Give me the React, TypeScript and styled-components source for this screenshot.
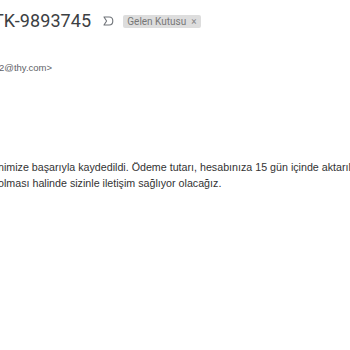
import React from "react";
import styled, { createGlobalStyle } from "styled-components";

const GlobalStyle = createGlobalStyle`
  html, body {
    margin: 0;
    padding: 0;
    background: #ffffff;
  }
`;

const Page = styled.div`
  width: 350px;
  height: 350px;
  overflow: hidden;
  background: #ffffff;
  font-family: "Liberation Sans", Arial, sans-serif;
  color: #222222;
`;

const Header = styled.div`
  display: flex;
  align-items: center;
  margin-left: -7px;
  padding-top: 9px;
  height: 24px;
`;

const Subject = styled.h2`
  margin: 0;
  font-family: Roboto, "Liberation Sans", sans-serif;
  font-weight: 400;
  font-size: 18px;
  line-height: 24px;
  color: #3c4043;
  letter-spacing: 0.1px;
  white-space: nowrap;
`;

const Marker = styled.svg`
  flex: none;
  margin-left: 12px;
  width: 11px;
  height: 10px;
`;

const Chip = styled.span`
  display: inline-flex;
  align-items: center;
  gap: 5px;
  margin-left: 9px;
  height: 13px;
  padding: 0 4px;
  border-radius: 2px;
  background: #dddddd;
  color: #777777;
  font-family: Roboto, "Liberation Sans", sans-serif;
  font-size: 10px;
  white-space: nowrap;
`;

const Close = styled.span`
  font-size: 10px;
  color: #888888;
`;

const Sender = styled.div`
  margin: 28px 0 0 -1px;
  font-size: 9.5px;
  line-height: 14px;
  color: #5f6368;
  white-space: nowrap;
`;

const Body = styled.div`
  margin: 84px 0 0 -2px;
  font-size: 10.7px;
  line-height: 16px;
  color: #333333;
`;

const Line = styled.p`
  margin: 0;
  white-space: nowrap;
`;

const ImportanceIcon = () => (
  <Marker viewBox="0 0 11 10">
    <path
      d="M1 1 H6.2 C8.3 1 9.8 2.8 9.8 5 C9.8 7.2 8.3 9 6.2 9 H1 L3.6 5 Z"
      fill="none"
      stroke="#6f7378"
      strokeWidth="1.1"
      strokeLinejoin="round"
    />
  </Marker>
);

const App = () => {
  return (
    <Page>
      <GlobalStyle />
      <Header>
        <Subject>TK-9893745</Subject>
        <ImportanceIcon />
        <Chip>
          Gelen Kutusu
          <Close>×</Close>
        </Chip>
      </Header>

      <Sender>2@thy.com&gt;</Sender>

      <Body>
        <Line>
          nimize başarıyla kaydedildi. Ödeme tutarı, hesabınıza 15 gün içinde
          aktarılacaktır.
        </Line>
        <Line>olması halinde sizinle iletişim sağlıyor olacağız.</Line>
      </Body>
    </Page>
  );
};

export default App;
